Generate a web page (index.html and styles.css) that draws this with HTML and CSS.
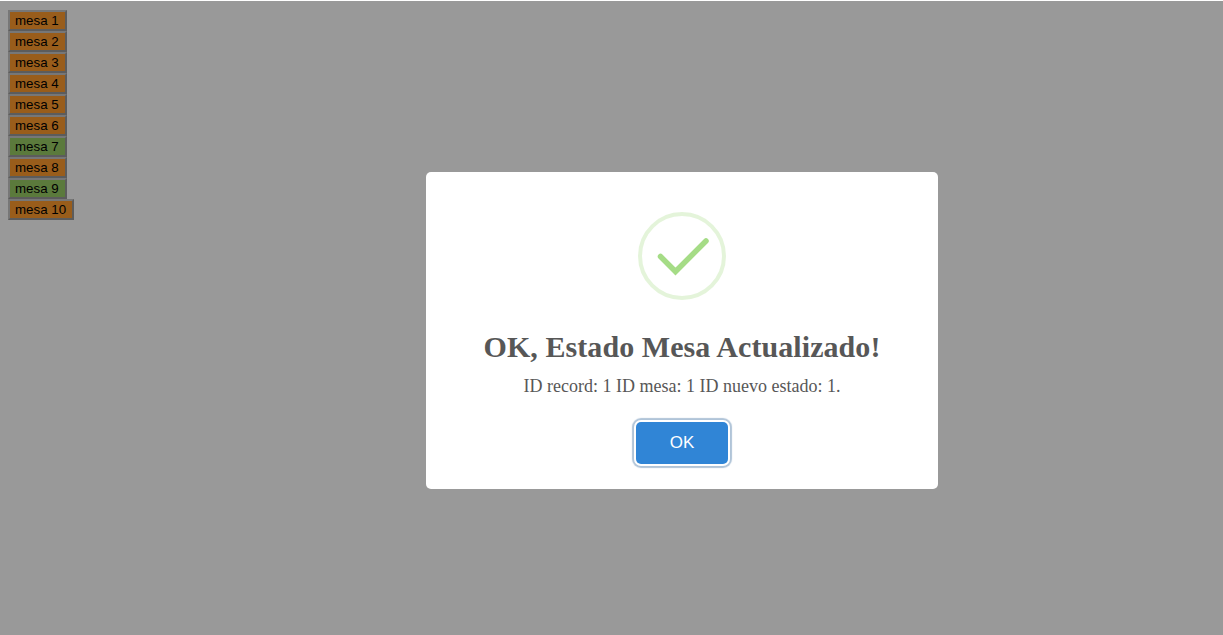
FILE: index.html
```html
<!DOCTYPE html>
<html lang="es">
<head>
    <meta charset="UTF-8">
    <meta name="viewport" content="width=device-width, initial-scale=1.0">
    <title>Mesas</title>
    <link rel="stylesheet" href="styles.css">
</head>
<body>
    <div class="mesas">
        <div><button class="mesa ocupada">mesa 1</button></div>
        <div><button class="mesa ocupada">mesa 2</button></div>
        <div><button class="mesa ocupada">mesa 3</button></div>
        <div><button class="mesa ocupada">mesa 4</button></div>
        <div><button class="mesa ocupada">mesa 5</button></div>
        <div><button class="mesa ocupada">mesa 6</button></div>
        <div><button class="mesa libre">mesa 7</button></div>
        <div><button class="mesa ocupada">mesa 8</button></div>
        <div><button class="mesa libre">mesa 9</button></div>
        <div><button class="mesa ocupada">mesa 10</button></div>
    </div>

    <div class="overlay">
        <div class="modal">
            <svg class="icon" width="88" height="88" viewBox="0 0 88 88">
                <circle cx="44" cy="44" r="42" fill="none" stroke="#a5dc86" stroke-opacity="0.3" stroke-width="4"/>
                <path d="M22.5 44.5 L37.5 59.5 L68 29" fill="none" stroke="#a5dc86" stroke-width="5.5" stroke-linecap="round"/>
            </svg>
            <h2 class="title">OK, Estado Mesa Actualizado!</h2>
            <div class="text">ID record: 1 ID mesa: 1 ID nuevo estado: 1.</div>
            <div class="actions">
                <button class="confirm">OK</button>
            </div>
        </div>
    </div>
</body>
</html>
```

FILE: styles.css
```css
html, body {
    height: 100%;
}
body {
    margin: 0;
    padding: 10px 8px 0;
    box-sizing: border-box;
    background-color: white;
    font-family: 'Liberation Serif', serif;
}
.mesas div {
    height: 21px;
}
.mesa {
    height: 21px;
    padding: 1px 6px 1px 5px;
    border: 2px solid;
    border-color: #c6c6c6 #999999 #999999 #c6c6c6;
    font-family: 'Liberation Sans', Arial, sans-serif;
    font-size: 13.33px;
    color: black;
    display: block;
}
.ocupada {
    background-color: #ff9c2e;
}
.libre {
    background-color: #98cb65;
}
.overlay {
    position: fixed;
    top: 1px;
    left: 0;
    right: 0;
    bottom: 0;
    padding: 25px 0 0 141px;
    background-color: rgba(0, 0, 0, 0.4);
    display: flex;
    align-items: center;
    justify-content: center;
}
.modal {
    width: 512px;
    height: 317px;
    box-sizing: border-box;
    padding: 40px 17px 0;
    background: white;
    border-radius: 5px;
    text-align: center;
}
.icon {
    display: block;
    margin: 0 auto;
}
.title {
    margin: 27px 0 0;
    font-size: 30px;
    line-height: 40px;
    font-weight: 600;
    letter-spacing: 0.07px;
    color: #575757;
}
.text {
    margin-top: 9px;
    font-size: 18px;
    line-height: 21px;
    color: #575757;
}
.actions {
    margin-top: 25px;
}
.confirm {
    width: 92px;
    height: 42px;
    padding: 0;
    border: none;
    border-radius: 5px;
    background-color: #3085d6;
    box-shadow: 0 0 0 2px white, 0 0 1px 4px #b0c4d8;
    font-family: 'Liberation Sans', Arial, sans-serif;
    font-size: 17px;
    color: white;
}
```
